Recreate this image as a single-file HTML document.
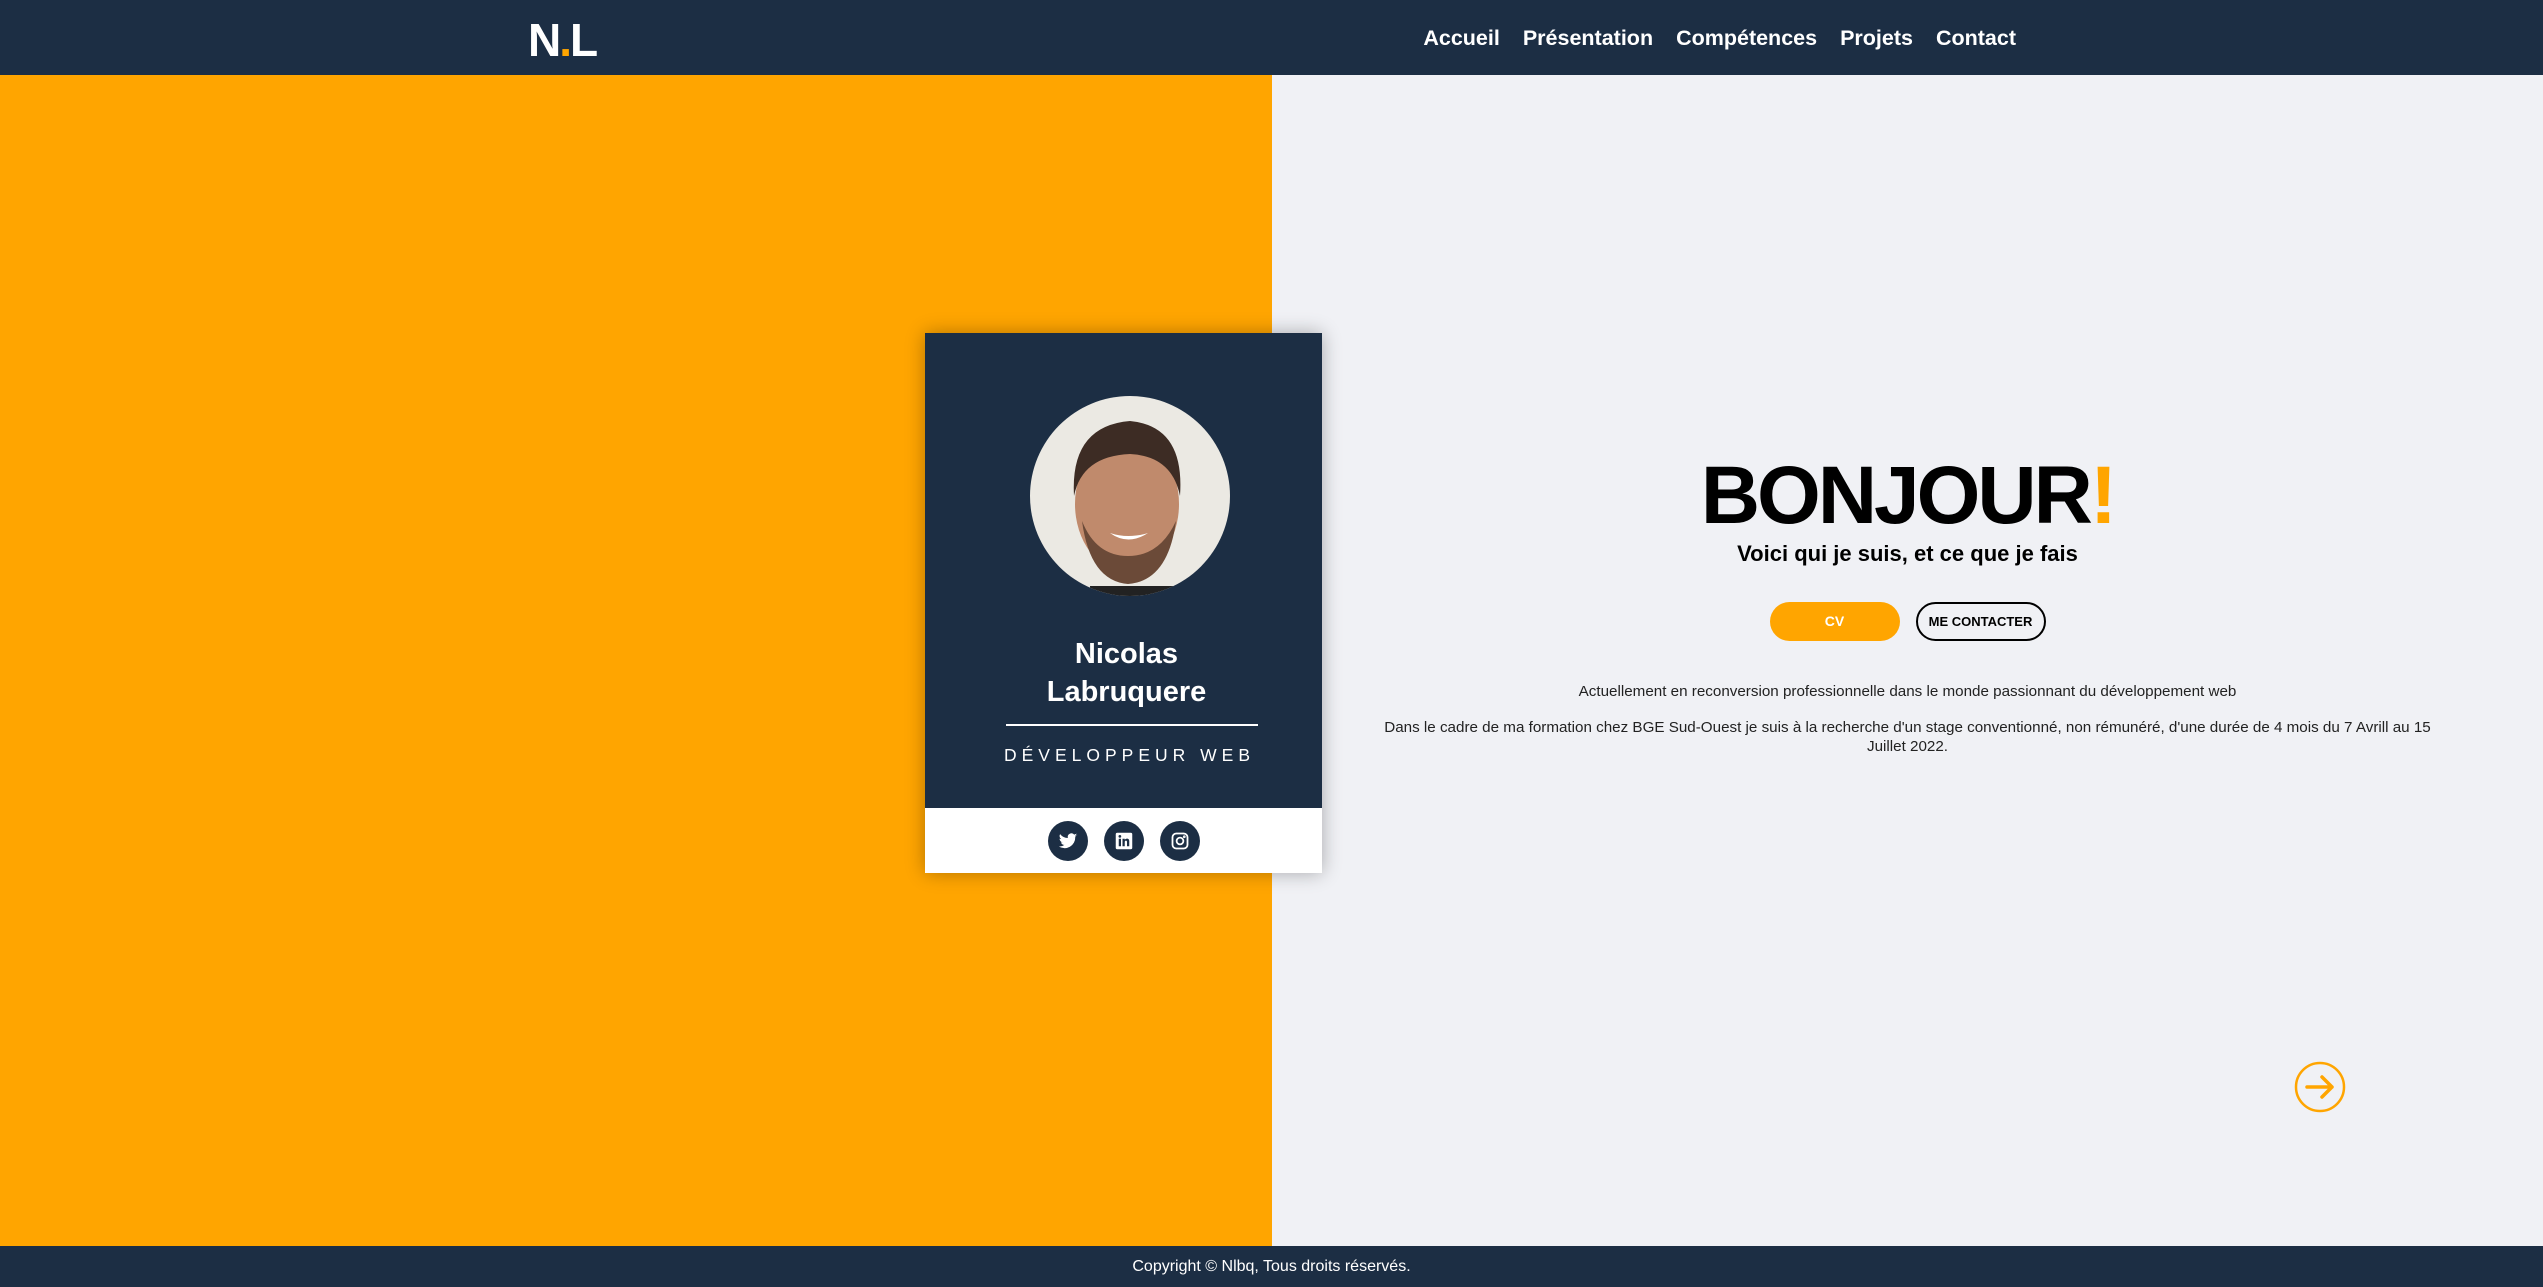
<!DOCTYPE html>
<html><head><meta charset="utf-8"><style>
*{margin:0;padding:0;box-sizing:border-box}
html{background:#1c2e44}
body{width:2543px;height:1285px;overflow:hidden;font-family:"Liberation Sans",sans-serif;background:#f0f1f5;position:relative}
.hdr{position:absolute;left:0;top:0;width:2543px;height:75px;background:#1c2e44}
.logo{position:absolute;left:528px;top:13px;color:#fff;font-size:46px;font-weight:bold;letter-spacing:-2px}
.logo span{color:#ffa500}
.nav{position:absolute;right:527px;top:26px;color:#fff;font-size:21.5px;font-weight:bold;display:flex;gap:23px}
.left{position:absolute;left:0;top:75px;width:1272px;height:1172px;background:#ffa500}
.ftr{position:absolute;left:0;top:1246px;width:2543px;height:39px;background:#1c2e44;color:#fff;font-size:16px;text-align:center;line-height:41px}
.card{position:absolute;left:925px;top:333px;width:397px;height:540px;background:#1c2e44;box-shadow:0 0 18px rgba(0,0,0,.3)}
.photo{position:absolute;left:105px;top:63px;width:200px;height:200px;border-radius:50%;background:#ebe9e3;overflow:hidden}
.name{position:absolute;left:0;width:100%;top:302px;text-align:center;color:#fff;font-size:29px;font-weight:bold;line-height:38px;padding-left:6px}
.line{position:absolute;left:81px;top:391px;width:252px;height:2px;background:#fff}
.role{position:absolute;left:0;width:100%;top:412px;text-align:center;color:#fff;font-size:17.5px;letter-spacing:5px;padding-left:12px}
.soc{position:absolute;left:0;top:475px;width:100%;height:65px;background:#fff;display:flex;justify-content:center;align-items:center;gap:16px}
.soc div{width:40px;height:40px;border-radius:50%;background:#1c2e44;display:flex;align-items:center;justify-content:center}
.right{position:absolute;left:1272px;top:75px;width:1271px;text-align:center}
h1{position:absolute;left:0;width:100%;top:371px;font-size:82px;line-height:100px;color:#000;font-weight:bold;letter-spacing:-3px}
h1 span{color:#ffa500}
.sub{position:absolute;left:0;width:100%;top:466px;font-size:22px;font-weight:bold}
.btns{position:absolute;left:0;width:100%;top:527px;display:flex;justify-content:center;gap:16px}
.b{height:39px;width:130px;border-radius:20px;font-size:14px;font-weight:bold;line-height:39px}
.cv{background:#ffa500;color:#fff}
.mc{border:2px solid #000;line-height:35px;font-size:13px}
.p{position:absolute;left:100px;width:1071px;font-size:15.2px;color:#222;line-height:19px}
</style></head><body>
<div class="hdr"><div class="logo">N<span>.</span>L</div>
<div class="nav"><span>Accueil</span><span>Présentation</span><span>Compétences</span><span>Projets</span><span>Contact</span></div></div>
<div class="left"></div>
<div class="right">
<h1>BONJOUR<span>!</span></h1>
<div class="sub">Voici qui je suis, et ce que je fais</div>
<div class="btns"><div class="b cv">CV</div><div class="b mc">ME CONTACTER</div></div>
<div class="p" style="top:607px">Actuellement en reconversion professionnelle dans le monde passionnant du développement web</div>
<div class="p" style="top:643px">Dans le cadre de ma formation chez BGE Sud-Ouest je suis à la recherche d'un stage conventionné, non rémunéré, d'une durée de 4 mois du 7 Avrill au 15 Juillet 2022.</div>
</div>
<div class="card">
<div class="photo"><svg width="200" height="200"><ellipse cx="97" cy="108" rx="52" ry="68" fill="#c08a6c"/><path d="M44 100 Q40 30 100 25 Q155 30 150 100 Q142 60 100 58 Q52 60 44 100Z" fill="#3d2c24"/><path d="M52 125 Q60 185 98 188 Q138 185 146 125 Q130 160 98 160 Q66 160 52 125Z" fill="#6b4a38"/><path d="M80 137 Q98 150 118 137 Q98 143 80 137Z" fill="#fff"/><rect x="60" y="190" width="85" height="20" fill="#222"/></svg></div>
<div class="name">Nicolas<br>Labruquere</div>
<div class="line"></div>
<div class="role">DÉVELOPPEUR WEB</div>
<div class="soc">
<div><svg width="20" height="20" viewBox="0 0 24 24"><path fill="#fff" d="M23 5c-.8.4-1.7.6-2.6.7.9-.6 1.6-1.4 2-2.5-.9.5-1.9.9-2.9 1.1A4.5 4.5 0 0 0 11.8 8.4 12.8 12.8 0 0 1 2.5 3.7a4.5 4.5 0 0 0 1.4 6c-.7 0-1.4-.2-2-.6 0 2.2 1.5 4 3.6 4.4-.7.2-1.4.2-2 .1.6 1.8 2.3 3.1 4.2 3.1A9 9 0 0 1 1 18.6 12.8 12.8 0 0 0 20.7 7.3V6.8c.9-.6 1.7-1.4 2.3-2.3z"/></svg></div>
<div><svg width="18" height="18" viewBox="0 0 24 24"><rect x="1" y="1" width="22" height="22" rx="2" fill="#fff"/><rect x="5" y="9" width="3" height="10" fill="#1c2e44"/><circle cx="6.5" cy="5.8" r="1.8" fill="#1c2e44"/><path d="M10 9h3v1.5c.6-1 1.7-1.7 3-1.7 2.3 0 3 1.5 3 3.8V19h-3v-5.5c0-1.2-.4-2-1.5-2s-1.5.9-1.5 2V19h-3z" fill="#1c2e44"/></svg></div>
<div><svg width="18" height="18" viewBox="0 0 24 24" fill="none" stroke="#fff" stroke-width="2.4"><rect x="2" y="2" width="20" height="20" rx="5"/><circle cx="12" cy="12" r="4.5"/><circle cx="17.7" cy="6.3" r=".6" fill="#fff"/></svg></div>
</div></div>
<svg style="position:absolute;left:2294px;top:1061px" width="52" height="52" viewBox="0 0 52 52" fill="none" stroke="#ffa500" stroke-width="2.5" stroke-linecap="round" stroke-linejoin="round"><circle cx="26" cy="26" r="24"/><path d="M13 26h25M28 16l10 10-10 10" stroke-width="3.5"/></svg>
<div class="ftr">Copyright © Nlbq, Tous droits réservés.</div>
</body></html>
